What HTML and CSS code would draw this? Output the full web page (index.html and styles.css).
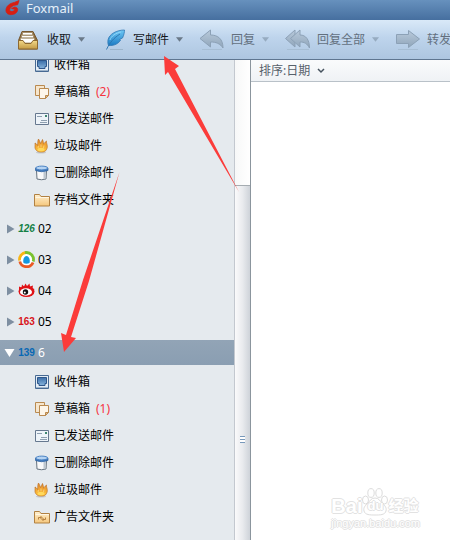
FILE: index.html
```html
<!DOCTYPE html>
<html lang="zh-CN">
<head>
    <meta charset="UTF-8">
    <title>Foxmail</title>
    <link rel="stylesheet" href="styles.css">
</head>
<body>
    <svg class="defs" aria-hidden="true">
        <defs>
            <linearGradient id="blue" x2="0" y2="1"><stop stop-color="#3b6ea8"/><stop offset="1" stop-color="#86b4dc"/></linearGradient>
            <linearGradient id="gold" x2="0" y2="1"><stop stop-color="#f3d98a"/><stop offset="1" stop-color="#c39a45"/></linearGradient>
            <linearGradient id="feather" x2="0" y2="1"><stop stop-color="#6fc8f5"/><stop offset="1" stop-color="#1d7cc4"/></linearGradient>
            <linearGradient id="grey" x2="0" y2="1"><stop stop-color="#b9cadb"/><stop offset="1" stop-color="#8fa5ba"/></linearGradient>
            <linearGradient id="folder" x2="0" y2="1"><stop stop-color="#fff0cf"/><stop offset="1" stop-color="#f5c77c"/></linearGradient>
            <linearGradient id="flame" x2="0" y2="1"><stop stop-color="#e58a2c"/><stop offset="1" stop-color="#ffc53a"/></linearGradient>
        </defs>
        <symbol id="inbox" viewBox="0 0 16 16">
            <path d="M1.500 1.500h13v13h-13z" fill="#e3edf6" stroke="#476a93"/>
            <path d="M3.500 3.500h9v6H11v2H5v-2H3.500z" fill="url(#blue)" stroke="#2f578a"/>
            <path d="M2 13.500h12" stroke="#9fb5cb"/>
        </symbol>
        <symbol id="draft" viewBox="0 0 16 16">
            <path d="M1.500 1.500h9v10h-9z" fill="#f6e6cd" stroke="#b98a50"/>
            <path d="M5.500 4.500h9v7l-3 3h-6z" fill="#fdf6ea" stroke="#b98a50"/>
            <path d="M14.500 11.500h-3v3z" fill="#dfb986" stroke="#b98a50"/>
        </symbol>
        <symbol id="sent" viewBox="0 0 16 16">
            <path d="M1.500 2.500h13v11h-13z" fill="#eef4f9" stroke="#66788f"/>
            <path d="M3 5.500h5M7 9.500h6M6 11.500h7" stroke="#8e9fb0"/>
            <path d="M11 4h2v2h-2z" fill="#3f876f"/>
        </symbol>
        <symbol id="junk" viewBox="0 0 16 16">
            <ellipse cx="7" cy="14.500" rx="5" ry="1" fill="#c6c9cb"/>
            <path d="M2.500 12.500C0 10 1.500 8 1 5c1.500.5 2 2 2.500 2.500C4 5 3.500 3 4.500 1c1 1.500 1.500 3 2 4.500C7.500 4 8 2.500 8.500 1.500c.8 1.500.8 3 1 4.500 1-.5 1.500-2 3-3-.5 2 2 5 0 8.500C11.500 13.500 10 14 7.500 14c-2 0-3.500 0-5-1.500z" fill="url(#flame)" stroke="#bd722a" stroke-width=".7"/>
            <path d="M4.500 8l-.5 2M7 6.500V9M10 7.500L9.500 10" stroke="#f8e2a8" stroke-width=".6"/>
            <ellipse cx="7" cy="11.500" rx="3.500" ry="1.800" fill="#ffd95c"/>
        </symbol>
        <symbol id="trash" viewBox="0 0 16 16">
            <path d="M2.500 5.500h10l-.5 8.500q-4.500 1.500-9 0z" fill="#f8f9fa" stroke="#65727f"/>
            <path d="M9.500 6.500h2.500l-.5 7-2 .5z" fill="#bcc6cf"/>
            <path d="M1.500 3v2.500q6 2.500 12.500 0V3z" fill="#3e79bd" stroke="#2c5e9b" stroke-width=".7"/>
            <ellipse cx="7.750" cy="3" rx="6" ry="1.900" fill="#b5d3f2" stroke="#4b83c4"/>
        </symbol>
        <symbol id="archive" viewBox="0 0 16 16">
            <path d="M.5 14V2.500h5l1.500 2h8.500V14z" fill="url(#folder)" stroke="#b18142"/>
            <path d="M1.500 5.500H15" stroke="#fff6e3"/>
        </symbol>
        <symbol id="ads" viewBox="0 0 16 16">
            <use href="#archive"/>
            <path d="M4.500 10.500v-2h3M6.500 7L8 8.500 6.500 10M11.500 8.500v2h-3M9.500 9L8 10.500 9.500 12" fill="none" stroke="#ae7735" stroke-width=".9"/>
        </symbol>
        <symbol id="collapsed" viewBox="0 0 8 10"><path d="M0 .5v9L7.500 5z" fill="#7e8fa1"/></symbol>
        <symbol id="caret" viewBox="0 0 8 5"><path d="M0 0h8L4 5z" fill="currentColor"/></symbol>
        <symbol id="reply" viewBox="0 0 25 22">
            <path d="M3 20.500h20" stroke="#9fb5ca" opacity=".6"/>
            <path d="M1 9.500L11.500 1v5C19 6 24 10 24 19c-3-4.500-7-6-12.500-6v5z" fill="url(#grey)" stroke="#8ca1b6"/>
        </symbol>
    </svg>

    <header class="titlebar">
        <svg class="logo" viewBox="0 0 16 16"><path d="M15 0L10 2C5 3 1 6 1 10.500 1 14 4 15.500 7.500 15c4-.4 6-3 6-5.500C13.500 8 12 7 10 7l-3 1.500 2 .5c1 0 1.500.5 1.200 1.200C9.500 12 5 12.500 5 10.200 5 7 9 5 13.500 4.500z" fill="#d81e11" stroke="#d81e11" stroke-width=".8"/></svg>
        <span>Foxmail</span>
    </header>

    <nav class="toolbar">
        <button class="tool">
            <svg class="tool-icon" viewBox="0 0 25 22">
                <path d="M7 2.500h11l4.500 9v8.500h-19v-8.500z" fill="#8d6c3d" stroke="#76572e" stroke-linejoin="round"/>
                <path d="M7.500 3.500h10v3h-10zM6.500 6h12v3h-12zM5.500 9h14v5h-14z" fill="#fff" stroke="#a08a66" stroke-width=".8"/>
                <path d="M3.500 11.500H8l2 3h6l2-3h4.500v8.500h-19z" fill="url(#gold)" stroke="#8d6932"/>
            </svg>
            <span>收取</span>
            <svg class="caret"><use href="#caret"/></svg>
        </button>
        <button class="tool">
            <svg class="tool-icon" viewBox="0 0 25 22">
                <path d="M9 20.500h13" stroke="#9db5cb"/>
                <path d="M23.500 1C16 1 8 5 7 11c-.4 2 0 4 .5 5.500C14 17 18 14 19.500 11l-1-.5 3-1.500C23 6 23.500 3 23.500 1z" fill="url(#feather)" stroke="#3179b4" stroke-width=".8"/>
                <path d="M19 5C13 9 9 13 5.500 20.500" fill="none" stroke="#2a73ad" stroke-width=".9"/>
                <path d="M20 3C15 4 10 7 9 11" fill="none" stroke="#9bdcfb" stroke-width=".8"/>
            </svg>
            <span>写邮件</span>
            <svg class="caret"><use href="#caret"/></svg>
        </button>
        <button class="tool" disabled>
            <svg class="tool-icon"><use href="#reply"/></svg>
            <span>回复</span>
            <svg class="caret"><use href="#caret"/></svg>
        </button>
        <button class="tool" disabled>
            <svg class="tool-icon" viewBox="0 0 25 22">
                <path d="M2 20.500h22" stroke="#9fb5ca" opacity=".6"/>
                <path d="M.5 9.500L10 1v5l-3 3.500 3 3.500v5z" fill="url(#grey)" stroke="#8ca1b6"/>
                <path d="M5.500 9.500L15 1v5c6 0 9.500 5 9.500 13-2.500-4.500-5-6-9.500-6v5z" fill="url(#grey)" stroke="#8ca1b6"/>
            </svg>
            <span>回复全部</span>
            <svg class="caret"><use href="#caret"/></svg>
        </button>
        <button class="tool" disabled>
            <svg class="tool-icon" viewBox="0 0 25 22">
                <path d="M3 20.500h20" stroke="#9fb5ca" opacity=".6"/>
                <path d="M1.500 5.500h12v-4l11 8.500-11 8.500v-4h-12z" fill="url(#grey)" stroke="#8ca1b6"/>
            </svg>
            <span>转发</span>
        </button>
    </nav>

    <main class="main">
        <aside class="sidebar">
            <div class="tree">
                <a class="folder" href="#"><svg class="icon"><use href="#inbox"/></svg>收件箱</a>
                <a class="folder" href="#"><svg class="icon"><use href="#draft"/></svg>草稿箱 <span class="count">(2)</span></a>
                <a class="folder" href="#"><svg class="icon"><use href="#sent"/></svg>已发送邮件</a>
                <a class="folder" href="#"><svg class="icon"><use href="#junk"/></svg>垃圾邮件</a>
                <a class="folder" href="#"><svg class="icon"><use href="#trash"/></svg>已删除邮件</a>
                <a class="folder" href="#"><svg class="icon"><use href="#archive"/></svg>存档文件夹</a>

                <button class="account">
                    <svg class="arrow"><use href="#collapsed"/></svg>
                    <span class="brand green">126</span>02
                </button>
                <button class="account">
                    <svg class="arrow"><use href="#collapsed"/></svg>
                    <svg class="brand" viewBox="0 0 17 17">
                        <circle cx="8.500" cy="8.500" r="6.500" fill="#fff"/>
                        <g fill="none" stroke-width="2.800">
                            <path d="M1.600 9.500A7 7 0 0 1 8 1.500" stroke="#f9b513"/>
                            <path d="M7 1.700A7 7 0 0 1 15.200 10.500" stroke="#7ac22f"/>
                            <path d="M15 11.500A7 7 0 0 1 1.800 10.500" stroke="#ea5a24"/>
                        </g>
                        <path d="M5.500 12C4.500 8 6.500 5 8.500 5s4 3 3 7q-3 1.500-6 0z" fill="#1598e0"/>
                    </svg>03
                </button>
                <button class="account">
                    <svg class="arrow"><use href="#collapsed"/></svg>
                    <svg class="brand" viewBox="0 0 17 17">
                        <path d="M1 8l0-3.500 2.500 1 .5-3 2 2 1.500-3 1.500 2.500 2.500-2.500.5 3 3-1-.5 3 2 .5-1.500 2z" fill="#e01216"/>
                        <ellipse cx="8.500" cy="9.500" rx="8" ry="5.500" fill="#e01216"/>
                        <ellipse cx="8" cy="10" rx="6" ry="3.700" fill="#fff"/>
                        <circle cx="7.500" cy="10" r="2.700" fill="#111"/>
                        <circle cx="6.800" cy="10.500" r="1" fill="#fff"/>
                    </svg>04
                </button>
                <button class="account">
                    <svg class="arrow"><use href="#collapsed"/></svg>
                    <span class="brand red">163</span>05
                </button>
                <button class="account selected">
                    <svg class="arrow open" viewBox="0 0 10 8"><path d="M0 0h10L5 8z" fill="#fff"/></svg>
                    <span class="brand blue">139</span>6
                </button>

                <a class="folder" href="#"><svg class="icon"><use href="#inbox"/></svg>收件箱</a>
                <a class="folder" href="#"><svg class="icon"><use href="#draft"/></svg>草稿箱 <span class="count">(1)</span></a>
                <a class="folder" href="#"><svg class="icon"><use href="#sent"/></svg>已发送邮件</a>
                <a class="folder" href="#"><svg class="icon"><use href="#trash"/></svg>已删除邮件</a>
                <a class="folder" href="#"><svg class="icon"><use href="#junk"/></svg>垃圾邮件</a>
                <a class="folder" href="#"><svg class="icon"><use href="#ads"/></svg>广告文件夹</a>
            </div>
        </aside>

        <div class="scrollbar">
            <div class="thumb"><span class="grip"></span></div>
        </div>

        <section class="list">
            <button class="sort">
                排序:日期
                <svg class="chevron" viewBox="0 0 8 6"><path d="M1 1l3 3 3-3" fill="none" stroke="#46525e" stroke-width="1.500"/></svg>
            </button>
        </section>
    </main>

    <div class="watermark">
        <div class="watermark-name">
            <span>Bai</span>
            <span class="paw">
                <svg viewBox="0 0 26 28">
                    <g fill="#fff" stroke="#dcdcdc">
                        <ellipse cx="3.500" cy="12" rx="3" ry="4"/>
                        <ellipse cx="9" cy="5" rx="3.200" ry="4.400"/>
                        <ellipse cx="17" cy="5" rx="3.200" ry="4.400"/>
                        <ellipse cx="22.500" cy="12" rx="3" ry="4"/>
                        <path d="M13 10c4 0 5 3 7 5s5 4 4 8c-1 4-6 4-11 4s-10 0-11-4c-1-4 2-6 4-8s3-5 7-5z"/>
                    </g>
                </svg>
                <span class="du">du</span>
            </span>
            <span class="jingyan">经验</span>
        </div>
        <div class="watermark-url">jingyan.baidu.com</div>
    </div>

    <svg class="pointers" width="450" height="540" viewBox="0 0 450 540" aria-hidden="true">
        <path d="M164 56L179 66L175 69L239 192L168 72L165 75Z" fill="#fb3c3a"/>
        <path d="M64 352L61 333L66 335L83 280L119.500 172L89 281L71 337L76 338Z" fill="#fb3c3a"/>
    </svg>
</body>
</html>
```

FILE: styles.css
```css
* {
    box-sizing: border-box;
}
body {
    margin: 0;
    height: 100vh;
    display: flex;
    flex-direction: column;
    position: relative;
    overflow: hidden;
    background: #fff;
    color: #000;
    font-family: "Noto Sans", "Noto Sans CJK SC", sans-serif;
    font-size: 12px;
    line-height: 16px;
}
button {
    margin: 0;
    padding: 0;
    border: none;
    background: none;
    color: inherit;
    font: inherit;
    white-space: nowrap;
}
svg {
    flex: none;
}
.defs {
    position: absolute;
    width: 0;
    height: 0;
}

/* title bar */
.titlebar {
    flex: none;
    display: flex;
    align-items: center;
    gap: 6px;
    height: 20px;
    padding: 0 5px 4px;
    background: linear-gradient(#6791bd, #466f9f);
    color: #e6f0fa;
    font-size: 13px;
}
.logo {
    width: 15px;
    height: 16px;
}

/* toolbar */
.toolbar {
    flex: none;
    display: flex;
    gap: 16px;
    height: 40px;
    padding-left: 15px;
    overflow: hidden;
    background: linear-gradient(#d9e9f8, #bed4ec 45%, #adc6e0);
    border-bottom: 1px solid #5e7690;
}
.tool {
    flex: none;
    display: flex;
    align-items: center;
    gap: 7px;
    color: #15191e;
}
.tool:disabled {
    color: #63707e;
}
.tool-icon {
    width: 25px;
    height: 22px;
}
.caret {
    width: 7px;
    height: 5px;
    color: #6a7988;
}
.tool:disabled .caret {
    color: #96abc0;
}

/* folder tree */
.main {
    flex: 1;
    display: flex;
    min-height: 0;
}
.sidebar {
    flex: 0 0 234px;
    overflow: hidden;
    background: #e5eaee;
}
.tree {
    margin-top: -9px;
}
.folder {
    display: flex;
    align-items: center;
    gap: 4px;
    height: 27px;
    padding-left: 34px;
    color: #000;
    text-decoration: none;
}
.icon {
    width: 16px;
    height: 16px;
}
.count {
    padding-left: 2px;
    color: #f5333f;
}
.account {
    display: flex;
    align-items: center;
    gap: 3px;
    width: 100%;
    height: 25px;
    margin: 3px 0 6px;
    padding-left: 7px;
}
.account.selected {
    margin-bottom: 3px;
    padding-left: 4px;
    background: linear-gradient(#92a4b6, #8a9eb2);
    color: #fff;
}
.arrow {
    width: 8px;
    height: 10px;
}
.arrow.open {
    width: 11px;
    height: 8px;
}
.brand {
    width: 17px;
    height: 17px;
}
span.brand {
    display: flex;
    justify-content: center;
    font: bold 10px/17px "Liberation Sans", sans-serif;
}
.brand.green {
    color: #128045;
    font-style: italic;
}
.brand.red {
    color: #d8141a;
}
.brand.blue {
    color: #0868b4;
}

/* scrollbar */
.scrollbar {
    flex: 0 0 17px;
    display: flex;
    flex-direction: column;
    padding-top: 125px;
    border-left: 1px solid #c3c8cf;
    border-right: 1px solid #8b959d;
    background: linear-gradient(90deg, #f7f8f8, #fff);
}
.thumb {
    flex: 1;
    display: flex;
    justify-content: center;
    border-top: 1px solid #a5acb1;
    background: linear-gradient(90deg, #fafafb, #e9ebee 50%, #ced3d9);
}
.grip {
    width: 5px;
    height: 7px;
    margin-top: 250px;
    background: repeating-linear-gradient(#7899bb 0 1px, #fff 1px 3px);
}

/* message list */
.list {
    flex: 1;
    min-width: 0;
}
.sort {
    display: flex;
    align-items: center;
    gap: 7px;
    width: 100%;
    height: 22px;
    padding-left: 8px;
    border-bottom: 1px solid #b9c1c8;
    background: linear-gradient(#fafbfc, #eff2f5);
    color: #57616b;
}
.chevron {
    width: 8px;
    height: 6px;
}

/* watermark */
.watermark {
    position: absolute;
    right: 30px;
    bottom: 10px;
    color: #fff;
    font-family: "Liberation Sans", "Noto Sans CJK SC", sans-serif;
    text-shadow: 1px 0 #e2e2e2, -1px 0 #e2e2e2, 0 1px #e2e2e2, 0 -1px #e2e2e2;
}
.watermark-name {
    display: flex;
    align-items: flex-end;
    height: 30px;
    font-size: 20px;
    font-weight: bold;
    line-height: 20px;
}
.jingyan {
    font-size: 15px;
    line-height: 20px;
}
.paw {
    position: relative;
    width: 26px;
    height: 28px;
}
.paw svg {
    display: block;
    width: 26px;
    height: 28px;
}
.du {
    position: absolute;
    right: 0;
    bottom: 3px;
    left: 0;
    font-size: 13px;
    line-height: 14px;
    text-align: center;
}
.watermark-url {
    font-size: 11px;
    line-height: 14px;
}

/* red arrows drawn over the window */
.pointers {
    position: absolute;
    top: 0;
    left: 0;
    pointer-events: none;
}
```
